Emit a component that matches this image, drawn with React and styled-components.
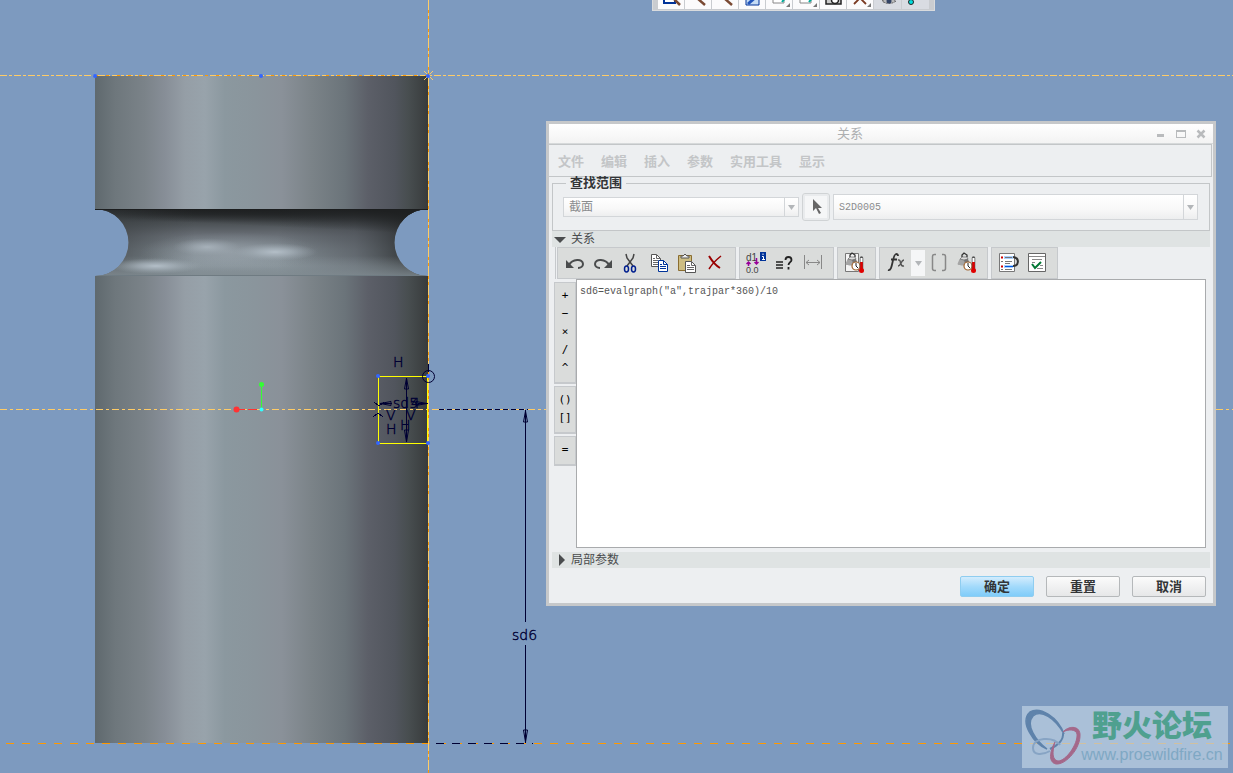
import React from 'react'
import styled, { createGlobalStyle } from 'styled-components'


const GlobalStyle = createGlobalStyle`
  * {
    box-sizing: border-box;
  }
  body {
    margin: 0;
    background: #7d9abf;
    font-family: "Liberation Sans", "Noto Sans CJK SC", sans-serif;
  }
  button, select, textarea {
    font-family: inherit;
    margin: 0;
  }
`

const bodyStops = [
  [0, '#5f696e'], [6, '#6e777c'], [15, '#7b8389'], [21, '#878e97'], [27, '#959ea6'],
  [33, '#98a3ab'], [39, '#8b989f'], [48, '#8a959c'], [56, '#8a9199'], [65, '#7b8388'],
  [75, '#6b747a'], [82, '#5c5f68'], [90, '#51555d'], [94, '#484e50'], [100, '#383b3c'],
]

const Model = () => (
  <Drawing aria-label="model view">
    <defs>
      <linearGradient id="body">
        {bodyStops.map(([at, color]) => <stop key={at} offset={at + '%'} stopColor={color} />)}
      </linearGradient>
      <linearGradient id="grooveShade" x1="0" y1="0" x2="0" y2="1">
        <stop offset="0" stopColor="#1e2021" />
        <stop offset="0.08" stopColor="#2a2d2f" />
        <stop offset="0.2" stopColor="#4a4f53" />
        <stop offset="0.4" stopColor="#6a7077" />
        <stop offset="0.6" stopColor="#7d868d" />
        <stop offset="0.85" stopColor="#8b969d" />
        <stop offset="1" stopColor="#7d888f" />
      </linearGradient>
      <linearGradient id="grooveSide">
        <stop offset="0.08" stopColor="#3b4043" stopOpacity="0.6" />
        <stop offset="0.3" stopColor="#3b4043" stopOpacity="0" />
        <stop offset="0.55" stopColor="#3b4043" stopOpacity="0" />
        <stop offset="0.78" stopColor="#44484e" stopOpacity="0.5" />
        <stop offset="0.93" stopColor="#26292a" stopOpacity="0.8" />
      </linearGradient>
      <linearGradient id="grooveTop" x1="0.6" y1="0.6" x2="0.75" y2="0">
        <stop offset="0.5" stopColor="#1e2021" stopOpacity="0" />
        <stop offset="1" stopColor="#1e2021" />
      </linearGradient>
      <linearGradient id="grooveLip" x1="0" y1="0" x2="0" y2="1">
        <stop offset="0" stopColor="#8b969d" stopOpacity="0" />
        <stop offset="1" stopColor="#838e94" stopOpacity="0.8" />
      </linearGradient>
      <radialGradient id="shine">
        <stop offset="0" stopColor="#b4bfc8" />
        <stop offset="0.4" stopColor="#a9b4bd" stopOpacity="0.7" />
        <stop offset="1" stopColor="#98a3ab" stopOpacity="0" />
      </radialGradient>
      <clipPath id="groove">
        <path d="M95 209H428A33 33 0 0 0 428 276H95A33 33 0 0 0 95 209Z" />
      </clipPath>
    </defs>

    <rect x="95" y="76" width="333" height="133" fill="url(#body)" />
    <g clipPath="url(#groove)">
      <rect x="95" y="209" width="333" height="67" fill="url(#grooveShade)" />
      <rect x="95" y="209" width="333" height="67" fill="url(#grooveSide)" />
      <rect x="95" y="209" width="333" height="67" fill="url(#grooveTop)" />
      <rect x="95" y="256" width="333" height="20" fill="url(#grooveLip)" />
      <ellipse cx="230" cy="252" rx="90" ry="20" fill="url(#shine)" opacity="0.4" />
      <ellipse cx="207" cy="247" rx="34" ry="9" fill="url(#shine)" opacity="0.7" />
      <ellipse cx="275" cy="252" rx="42" ry="9" fill="url(#shine)" />
      <ellipse cx="156" cy="266" rx="46" ry="8" fill="url(#shine)" />
      <rect x="95" y="275" width="333" height="1" fill="#6f7b82" />
    </g>
    <rect x="95" y="209" width="333" height="1" fill="#1c1e1f" />
    <rect x="95" y="276" width="333" height="467" fill="url(#body)" />

    <g shapeRendering="crispEdges" fill="none">
      <line x1="0" y1="75.5" x2="100%" y2="75.5" stroke="#ffcc66" strokeDasharray="7 2 3 2" />
      <line x1="95" y1="75.5" x2="428" y2="75.5" stroke="#ff9900" strokeDasharray="3 8" />
      <line x1="0" y1="409.5" x2="100%" y2="409.5" stroke="#ffcc66" strokeDasharray="7 3 3 3" />
      <line x1="0" y1="743.5" x2="100%" y2="743.5" stroke="#ff9900" strokeDasharray="8 8" strokeDashoffset="-6" />
      <path d="M378.500 443V376.500H428" stroke="#ffff00" />
      <path d="M378 443.500H428" stroke="#ffff00" />
      <path d="M427.500 376v67" stroke="#ffff00" />
      <line x1="428.5" y1="0" x2="428.5" y2="100%" stroke="#ff9900" />
      <line x1="428.5" y1="0" x2="428.5" y2="100%" stroke="#ffcc66" strokeDasharray="10 3 3 3" />
      <path d="M424 71l9 9m0-9l-9 9" stroke="#ffcc66" />
      <path d="M439 409.5H528" stroke="#000033" strokeDasharray="5 3" />
      <path d="M436 743.5H533" stroke="#000033" strokeDasharray="8 8" />
      <path d="M525.5 410v212M525.5 645v98" stroke="#000033" />
      <path d="M406.5 378v64M380 403.5h12M418 403.5h10" stroke="#000033" />
      <path d="M374 402l5 4 5-4M373 417l5-4 5 4" stroke="#000033" />
    </g>
    <g stroke="#000033" fill="none">
      <path d="M525.5 411l-2 11h4zM525.5 742l-2-12h4zM406.5 378l-2 11h4zM406.5 442l-2-12h4z" />
      <path d="M380 403.5l11-2v4zM427 403.5l-11-2v4z" />
      <circle cx="428.500" cy="376.500" r="6" />
      <path d="M428.500 364v8" />
    </g>
    <g fill="#3366ff">
      {[[95, 76], [261, 76], [428, 76], [378, 376], [428, 376], [378, 443], [428, 443]].map(([x, y]) => (
        <circle key={x + '-' + y} cx={x} cy={y} r="2" />
      ))}
    </g>
    <SketchText x="393" y="367">H</SketchText>
    <SketchText x="386" y="434">H</SketchText>
    <SketchText x="400" y="430">H</SketchText>
    <SketchText x="386" y="420">V</SketchText>
    <SketchText x="406" y="420">V</SketchText>
    <SketchText x="393" y="408">sd5</SketchText>
    <SketchText x="411" y="408">4</SketchText>
    <SketchText x="512" y="640">sd6</SketchText>
    <path d="M261.500 409V384" stroke="#33ff33" />
    <path d="M236 409.500h25" stroke="#ff3333" strokeDasharray="9 3" />
    <circle cx="236.500" cy="409.500" r="3" fill="#ff3333" />
    <circle cx="261.500" cy="384.500" r="2.500" fill="#33ff33" />
    <circle cx="261.500" cy="409.500" r="2" fill="#33ffff" />
  </Drawing>
)

const Icon = ({ children }) => (
  <svg width="24" height="24" viewBox="0 0 24 24" fill="none" aria-hidden="true">{children}</svg>
)

const Weight = () => (
  <>
    <path d="M2.500 13l2-5h8l2 5c1 2-12 2-12 0z" fill="#a5a5a5" />
    <path d="M9 8h4l2 6h-5z" fill="#777" />
    <path d="M5 8l2-2h5l1 2-4 1z" fill="#ddd" stroke="#666" strokeWidth="0.700" />
    <path d="M7 6V4l2-2 3 2v2" stroke="#333" strokeWidth="1.300" />
    <circle cx="13" cy="15" r="4" fill="#fff" stroke="#a0622d" strokeWidth="1.200" />
    <path d="M13 12v3l2 2" stroke="#222" />
    <path d="M18.500 7v12" stroke="#555" strokeWidth="3.500" strokeLinecap="round" />
    <path d="M18.500 7v4" stroke="#fff" strokeWidth="2" />
    <path d="M18.500 11v8" stroke="#e00000" strokeWidth="2.500" />
    <circle cx="18.500" cy="19.500" r="2.500" fill="#e00000" />
  </>
)

const icons = {
  undo: (
    <Icon>
      <path d="M3 9v8h8z" fill="#4a4c4d" />
      <path d="M6 14C9 8 20 7 20 13c0 2-2 4-5 4" stroke="#4a4c4d" strokeWidth="2" />
    </Icon>
  ),
  redo: (
    <Icon>
      <path d="M21 9v8h-8z" fill="#4a4c4d" />
      <path d="M18 14C15 8 4 7 4 13c0 2 2 4 5 4" stroke="#4a4c4d" strokeWidth="2" />
    </Icon>
  ),
  cut: (
    <Icon>
      <path d="M7 3l1 4 6 8M15 3l-1 4-6 8" stroke="#444" strokeWidth="1.500" />
      <ellipse cx="7.500" cy="18" rx="2" ry="3" stroke="#001f8f" strokeWidth="1.500" />
      <ellipse cx="14.500" cy="18" rx="2" ry="3" stroke="#001f8f" strokeWidth="1.500" />
    </Icon>
  ),
  copy: (
    <Icon>
      <path d="M4.500 3.500h5l4 4v8h-9z" fill="#fff" stroke="#555" />
      <path d="M9.500 3.500v4h4M6 7.500h2M6 9.500h5M6 11.500h5M6 13.500h5" stroke="#666" />
      <path d="M11.500 9.500h5l4 4v7h-9z" fill="#fff" stroke="#003399" />
      <path d="M16.500 9.500v4h4M13 13.500h2M13 15.500h6M13 17.500h6" stroke="#003399" />
    </Icon>
  ),
  paste: (
    <Icon>
      <path d="M3.500 4.500h13v15h-13z" fill="#cdbd82" stroke="#8a6d30" />
      <path d="M6 7V5h2l2-2 2 2h2v2z" fill="#eee" stroke="#555" />
      <path d="M10.500 10.500h6l4 4v7h-10z" fill="#fff" stroke="#555" />
      <path d="M16.500 10.500v4h4M12 14.500h3M12 16.500h7M12 18.500h7" stroke="#666" />
    </Icon>
  ),
  remove: (
    <Icon>
      <path d="M6 5c3 5 6 9 11 12" stroke="#990000" strokeWidth="2" />
      <path d="M18 5C13 9 9 13 6 18" stroke="#990000" strokeWidth="1.500" />
    </Icon>
  ),
  dims: (
    <Icon>
      <text x="1" y="10" fontSize="10" fill="#444">d1</text>
      <text x="1" y="22" fontSize="9" fill="#444">0.0</text>
      <path d="M3.500 15v-4M1.500 13l2-2 2 2M11.500 7v6M9.500 11l2 2 2-2" stroke="#990099" strokeWidth="1.500" />
      <rect x="15" y="1" width="6" height="9" fill="#003399" />
      <path d="M17 5.500h1.500V8M17 8.500h3M18 2.500v1.500" stroke="#fff" />
    </Icon>
  ),
  evaluate: (
    <Icon>
      <path d="M3 11h7M3 14h7M3 17h7" stroke="#222" strokeWidth="1.500" />
      <path d="M12.500 9c0-4 6-4 6 0 0 2-3 2.500-3 5M15.500 16v2.500" stroke="#222" strokeWidth="1.800" />
    </Icon>
  ),
  measure: <Icon><path d="M3.500 4v14M20.500 4v14M5 11.500h14M8 9l-3 2.500L8 14M16 9l3 2.500L16 14" stroke="#888" /></Icon>,
  massBox: <Icon><path d="M2.500 2.500h13v18h-13z" fill="#f4f4f4" stroke="#777" /><Weight /></Icon>,
  fx: (
    <Icon>
      <path d="M3 19c5 2 4-15 8-16q2 0 2 2M6 8.500h6" stroke="#333" strokeWidth="1.800" />
      <path d="M13 9c4-1 1 7 6 6M19 9c-3 0-3 6-6 6" stroke="#555" strokeWidth="1.500" />
    </Icon>
  ),
  brackets: <Icon><path d="M9 3.500H7.500q-2 0-2 2v12q0 2 2 2H9M15 3.500h1.500q2 0 2 2v12q0 2-2 2H15" stroke="#888" strokeWidth="1.500" /></Icon>,
  mass: <Icon><Weight /></Icon>,
  sort: (
    <Icon>
      <path d="M2.500 2.500h15v18h-15z" fill="#fff" stroke="#777" />
      <path d="M7 6.500h9M7 15.500h9" stroke="#a9d0ff" strokeWidth="3" />
      <path d="M4 6.500h2M4 15.500h2" stroke="#cc0000" strokeWidth="2" />
      <path d="M4 10.500h2M4 18.500h2M8 6.500h7M8 10.500h7M8 12.500h5M8 18.500h7" stroke="#777" />
      <path d="M8 15.500h8" stroke="#0055dd" />
      <path d="M16 6c7 1 6 9 0 9" stroke="#333" strokeWidth="2" />
    </Icon>
  ),
  verify: (
    <Icon>
      <path d="M3.500 2.500h17v18h-17z" fill="#fff" stroke="#666" />
      <path d="M4 5.500h16M7 8.500h10M7 11.500h3M15 14.500h3M12 17.500h6" stroke="#888" />
      <path d="M7 13l3 4 6-6" stroke="#007733" strokeWidth="2" />
    </Icon>
  ),
}

const toolGroups = [
  ['undo', 'redo', 'cut', 'copy', 'paste', 'remove'],
  ['dims', 'evaluate', 'measure'],
  ['massBox'],
  ['fx', 'drop', 'brackets', 'mass'],
  ['sort', 'verify'],
]

const viewIcons = [
  <><path d="M5 6h11v13H5z" fill="#fff" stroke="#003399" strokeWidth="2" /><path d="M12 12l9 9" stroke="#7a4a33" strokeWidth="2.500" /></>,
  <path d="M11 14l8 7" stroke="#7a4a33" strokeWidth="2.500" />,
  <path d="M11 14l8 7" stroke="#7a4a33" strokeWidth="2.500" />,
  <><path d="M6 8h13v13H6z" fill="#c5dcf5" stroke="#003399" /><path d="M8 20L18 11" stroke="#2255bb" strokeWidth="3" /></>,
  <><path d="M6 8h11v11H6z" fill="#fff" stroke="#888" /><path d="M15 18l4-5" stroke="#00aa99" strokeWidth="2" /><path d="M23 19v4h-4z" fill="#777" /></>,
  <><path d="M6 8h11v11H6z" fill="#fff" stroke="#888" /><path d="M15 18l4-5" stroke="#00aa99" strokeWidth="2" /><path d="M23 19v4h-4z" fill="#777" /></>,
  <><path d="M5 11h15v9H5z" fill="#ccc" stroke="#222" strokeWidth="1.500" /><circle cx="14" cy="16" r="3.500" fill="#fff" stroke="#222" strokeWidth="1.500" /></>,
  <><path d="M6 20l6-6 6 6M9 14h8" stroke="#7a3a22" strokeWidth="1.800" /><path d="M23 19v4h-4z" fill="#777" /></>,
  <><path d="M6 17q7-5 14 0-7 5-14 0z" fill="#bbb" stroke="#555" strokeDasharray="2 1" /><circle cx="13" cy="17" r="2.500" fill="#346" /></>,
  <circle cx="7" cy="18" r="2.500" fill="#00dddd" stroke="#222" />,
]

const Arrow = () => (
  <svg width="7" height="5" aria-hidden="true"><path d="M0 0h7L3.500 5z" fill="#b3b6b9" /></svg>
)

const RelationsDialog = () => (
  <Dialog role="dialog" aria-label="关系">
    <TitleBar>
      <Title>关系</Title>
      <WindowButton aria-label="minimize"><svg width="10" height="10"><path d="M1 5h7v3H1z" fill="#b9bbbd" /></svg></WindowButton>
      <WindowButton aria-label="maximize"><svg width="10" height="10"><path d="M0 1h10v8H0zM1 3v5h8V3z" fill="#b9bbbd" fillRule="evenodd" /></svg></WindowButton>
      <WindowButton aria-label="close"><svg width="10" height="10"><path d="M1.500 1.500l7 7M8.500 1.500l-7 7" stroke="#b9bbbd" strokeWidth="2.500" /></svg></WindowButton>
    </TitleBar>
    <MenuBar>
      {['文件', '编辑', '插入', '参数', '实用工具', '显示'].map((item) => <MenuItem key={item}>{item}</MenuItem>)}
    </MenuBar>
    <Body>
      <Scope>
        <legend>查找范围</legend>
        <ScopeRow>
          <Combo $width="236px" $height="20px">
            <select aria-label="类型" defaultValue="截面"><option>截面</option></select>
            <span><Arrow /></span>
          </Combo>
          <PickButton aria-label="选取">
            <svg width="12" height="16"><path d="M3 0v12l3-3 3 6 2-1-3-5h4z" fill="#666" /></svg>
          </PickButton>
          <Combo $height="26px" $mono>
            <select aria-label="名称" defaultValue="S2D0005"><option>S2D0005</option></select>
            <span><Arrow /></span>
          </Combo>
        </ScopeRow>
      </Scope>
      <SectionHeader aria-expanded="true">
        <svg width="12" height="12"><path d="M0 4h12L6 10z" fill="#4a4c4e" /></svg>
        关系
      </SectionHeader>
      <ToolBar>
        {toolGroups.map((group) => (
          <ToolGroup key={group[0]}>
            {group.map((name) => name === 'drop'
              ? <DropButton key={name} aria-label={name}><Arrow /></DropButton>
              : <ToolButton key={name} aria-label={name}>{icons[name]}</ToolButton>)}
          </ToolGroup>
        ))}
      </ToolBar>
      <Workspace>
        <Palette>
          <PaletteGroup $height="102px">
            {['+', '−', '×', '/', '^'].map((op) => <Operator key={op}>{op}</Operator>)}
          </PaletteGroup>
          <PaletteGroup $height="48px">
            {['()', '[]'].map((op) => <Operator key={op}>{op}</Operator>)}
          </PaletteGroup>
          <PaletteGroup $height="30px">
            <Operator>=</Operator>
          </PaletteGroup>
        </Palette>
        <Editor aria-label="关系" spellCheck="false" defaultValue={'sd6=evalgraph("a",trajpar*360)/10'} />
      </Workspace>
      <SectionHeader aria-expanded="false">
        <svg width="12" height="12"><path d="M5 0v12l6-6z" fill="#4a4c4e" /></svg>
        局部参数
      </SectionHeader>
      <Actions>
        <ActionButton $primary>确定</ActionButton>
        <ActionButton>重置</ActionButton>
        <ActionButton>取消</ActionButton>
      </Actions>
    </Body>
  </Dialog>
)

const App = () => {
  return (
    <Viewport>
      <GlobalStyle />
      <Model />
      <ViewBar>
        {viewIcons.map((icon, i) => (
          <ViewButton key={i} $active={i > 7} aria-label={'view ' + (i + 1)}><Icon>{icon}</Icon></ViewButton>
        ))}
      </ViewBar>
      <RelationsDialog />
      <Watermark>
        <svg width="60" height="62" viewBox="0 0 60 62" fill="none" aria-hidden="true">
          <path d="M42 28C36 11 18 0 8 6c-11 10 4 32 17 37-11-8-22-24-14-33C19 3 33 12 42 28z" fill="#5f83ab" stroke="#5f83ab" strokeWidth="1.500" />
          <path d="M41 27c1 7-6 13-13 16" stroke="#5f83ab" strokeWidth="2" />
          <path d="M41 26c5-6 16-7 17 2 1 14-14 31-24 30-9-2-5-15-1-22-3 10-3 18 3 19 8 0 20-17 19-27-1-5-9-5-14-2z" fill="#a4688a" stroke="#a4688a" />
          <path d="M38 39C31 30 11 31 11 42c0 8 10 7 17 3" stroke="#87a4c4" strokeWidth="2" />
        </svg>
        <SiteName>
          <strong>野火论坛</strong>
          <span>www.proewildfire.cn</span>
        </SiteName>
      </Watermark>
    </Viewport>
  )
}

const Viewport = styled.main`
  position: relative;
  min-height: 100vh;
  overflow: hidden;
  background: #7d9abf;
`

const Drawing = styled.svg`
  position: absolute;
  inset: 0;
  width: 100%;
  height: 100%;
`

const SketchText = styled.text`
  font-family: "DejaVu Sans Light", "DejaVu Sans", sans-serif;
  font-weight: 200;
  font-size: 14px;
  fill: #000033;
  stroke: #000033;
  stroke-width: 0.4px;
`

const ViewBar = styled.div`
  position: absolute;
  top: -16px;
  left: 652px;
  display: flex;
  gap: 1px;
  height: 27px;
  padding: 0 5px 1px;
  background: #c9ccd0;
  border: 1px solid #d9dbdd;
  border-top: 0;
`

const ViewButton = styled.button`
  width: ${(props) => (props.$active ? '27px' : '26px')};
  padding: 0;
  border: 0;
  background: ${(props) => (props.$active ? '#d9dce2' : '#fbfbfc')};
`

const Dialog = styled.section`
  position: absolute;
  top: 121px;
  left: 546px;
  right: 17px;
  border: 3px solid #c6c8ca;
  background: #edeff1;
`

const TitleBar = styled.header`
  display: flex;
  align-items: center;
  height: 20px;
  padding-right: 2px;
  background: linear-gradient(#ffffff, #f3f3f3);
  border-bottom: 1px solid #d6d9da;
`

const Title = styled.h1`
  flex: 1;
  margin: 0;
  text-align: center;
  font-size: 13px;
  line-height: 20px;
  font-weight: 400;
  color: #adafb1;
`

const WindowButton = styled.button`
  display: flex;
  justify-content: center;
  width: 20px;
  padding: 0;
  border: 0;
  background: none;
`

const MenuBar = styled.nav`
  display: flex;
  gap: 17px;
  height: 33px;
  margin-right: 1px;
  padding: 0 9px;
  border: 1px solid #c3c6c8;
  border-left: 0;
`

const MenuItem = styled.button`
  padding: 0;
  border: 0;
  background: none;
  font-size: 13px;
  font-weight: 700;
  color: #c3c5c7;
`

const Body = styled.div`
  padding: 0 3px 6px;
`

const Scope = styled.fieldset`
  margin: 0;
  padding: 4px 11px 9px 10px;
  border: 1px solid #c3c6c8;

  legend {
    margin-left: 3px;
    padding: 0 4px;
    font-size: 13px;
    line-height: 12px;
    font-weight: 700;
    color: #333537;
  }
`

const ScopeRow = styled.div`
  display: flex;
  align-items: center;
  gap: 3px;
`

const Combo = styled.div`
  display: flex;
  flex: ${(props) => (props.$width ? '0 0 ' + props.$width : '1')};
  height: ${(props) => props.$height};
  border: 1px solid #d3d6d9;
  background: linear-gradient(#ffffff, #f8f8f8 60%, #edeeef);

  select {
    flex: 1;
    min-width: 0;
    appearance: none;
    padding: 0 5px;
    border: 0;
    background: none;
    color: #8a8c8e;
    font-family: ${(props) => (props.$mono ? '"Liberation Mono", monospace' : 'inherit')};
    font-size: ${(props) => (props.$mono ? '10px' : '12px')};
  }

  span {
    display: flex;
    align-items: center;
    justify-content: center;
    width: 14px;
    border-left: 1px solid #d3d6d9;
  }
`

const PickButton = styled.button`
  display: flex;
  align-items: center;
  justify-content: center;
  width: 28px;
  height: 28px;
  padding: 0;
  border: 1px solid #d0d3d5;
  border-radius: 3px;
  background: #f5f6f7;
  box-shadow: inset 0 0 0 2px #e9ebed;
`

const SectionHeader = styled.button`
  display: flex;
  align-items: center;
  gap: 5px;
  width: 100%;
  height: 16px;
  padding: 0 2px;
  border: 0;
  background: #dfe3e3;
  font-size: 12px;
  line-height: 18px;
  color: #4a4c4e;
`

const ToolBar = styled.div`
  display: flex;
  gap: 3px;
  height: 32px;
  margin-left: 3px;
  padding-left: 1px;
  border-left: 1px solid #c6c9cc;
`

const ToolGroup = styled.div`
  display: flex;
  align-items: stretch;
  padding: 0 6px 0 3px;
  border: 1px solid #c6c9cc;
  background: #dadcdb;
`

const ToolButton = styled.button`
  display: flex;
  align-items: center;
  justify-content: center;
  width: 28px;
  padding: 0;
  border: 0;
  background: none;
`

const DropButton = styled(ToolButton)`
  width: 14px;
  margin: 2px 0;
  background: #f5f6f7;
`

const Workspace = styled.div`
  display: flex;
  padding: 0 4px 4px 2px;
`

const Palette = styled.div`
  display: flex;
  flex-direction: column;
  gap: 2px;
  width: 22px;
  padding-top: 3px;
`

const PaletteGroup = styled.div`
  display: flex;
  flex-direction: column;
  height: ${(props) => props.$height};
  padding: 4px 0;
  border: 1px solid #c6c9cc;
  border-bottom-width: 2px;
  background: #dadcdb;
`

const Operator = styled.button`
  height: 18px;
  padding: 0;
  border: 0;
  background: none;
  font-family: "DejaVu Sans Mono", monospace;
  font-size: 11px;
  line-height: 18px;
  color: #000;
`

const Editor = styled.textarea`
  flex: 1;
  height: 269px;
  padding: 6px 3px;
  border: 1px solid #a9abad;
  background: #fff;
  font-family: "Liberation Mono", monospace;
  font-size: 10px;
  line-height: 12px;
  color: #555;
  resize: none;
  outline: 0;
`

const Actions = styled.footer`
  display: flex;
  justify-content: flex-end;
  gap: 12px;
  padding: 8px 4px 0;
`

const ActionButton = styled.button`
  width: 74px;
  height: 21px;
  padding: 0;
  border: 1px solid ${(props) => (props.$primary ? '#8fcdf0' : '#b5b8ba')};
  border-radius: 2px;
  background: ${(props) => (props.$primary ? 'linear-gradient(#d3ecfd, #a3dafb 50%, #80ccf9)' : 'linear-gradient(#fbfbfb, #e6e7e8)')};
  font-size: 13px;
  line-height: 18px;
  font-weight: 700;
  color: #333537;
`

const Watermark = styled.div`
  position: absolute;
  right: 5px;
  bottom: 5px;
  display: flex;
  width: 206px;
  height: 62px;
  background: rgba(190, 208, 226, 0.7);
`

const SiteName = styled.div`
  display: flex;
  flex-direction: column;
  align-items: center;
  width: 144px;
  margin-left: -2px;

  strong {
    font-size: 30px;
    line-height: 40px;
    font-weight: 900;
    color: #4fa08f;
  }

  span {
    font-size: 16px;
    line-height: 18px;
    color: #7fa8c4;
  }
`

export default App
